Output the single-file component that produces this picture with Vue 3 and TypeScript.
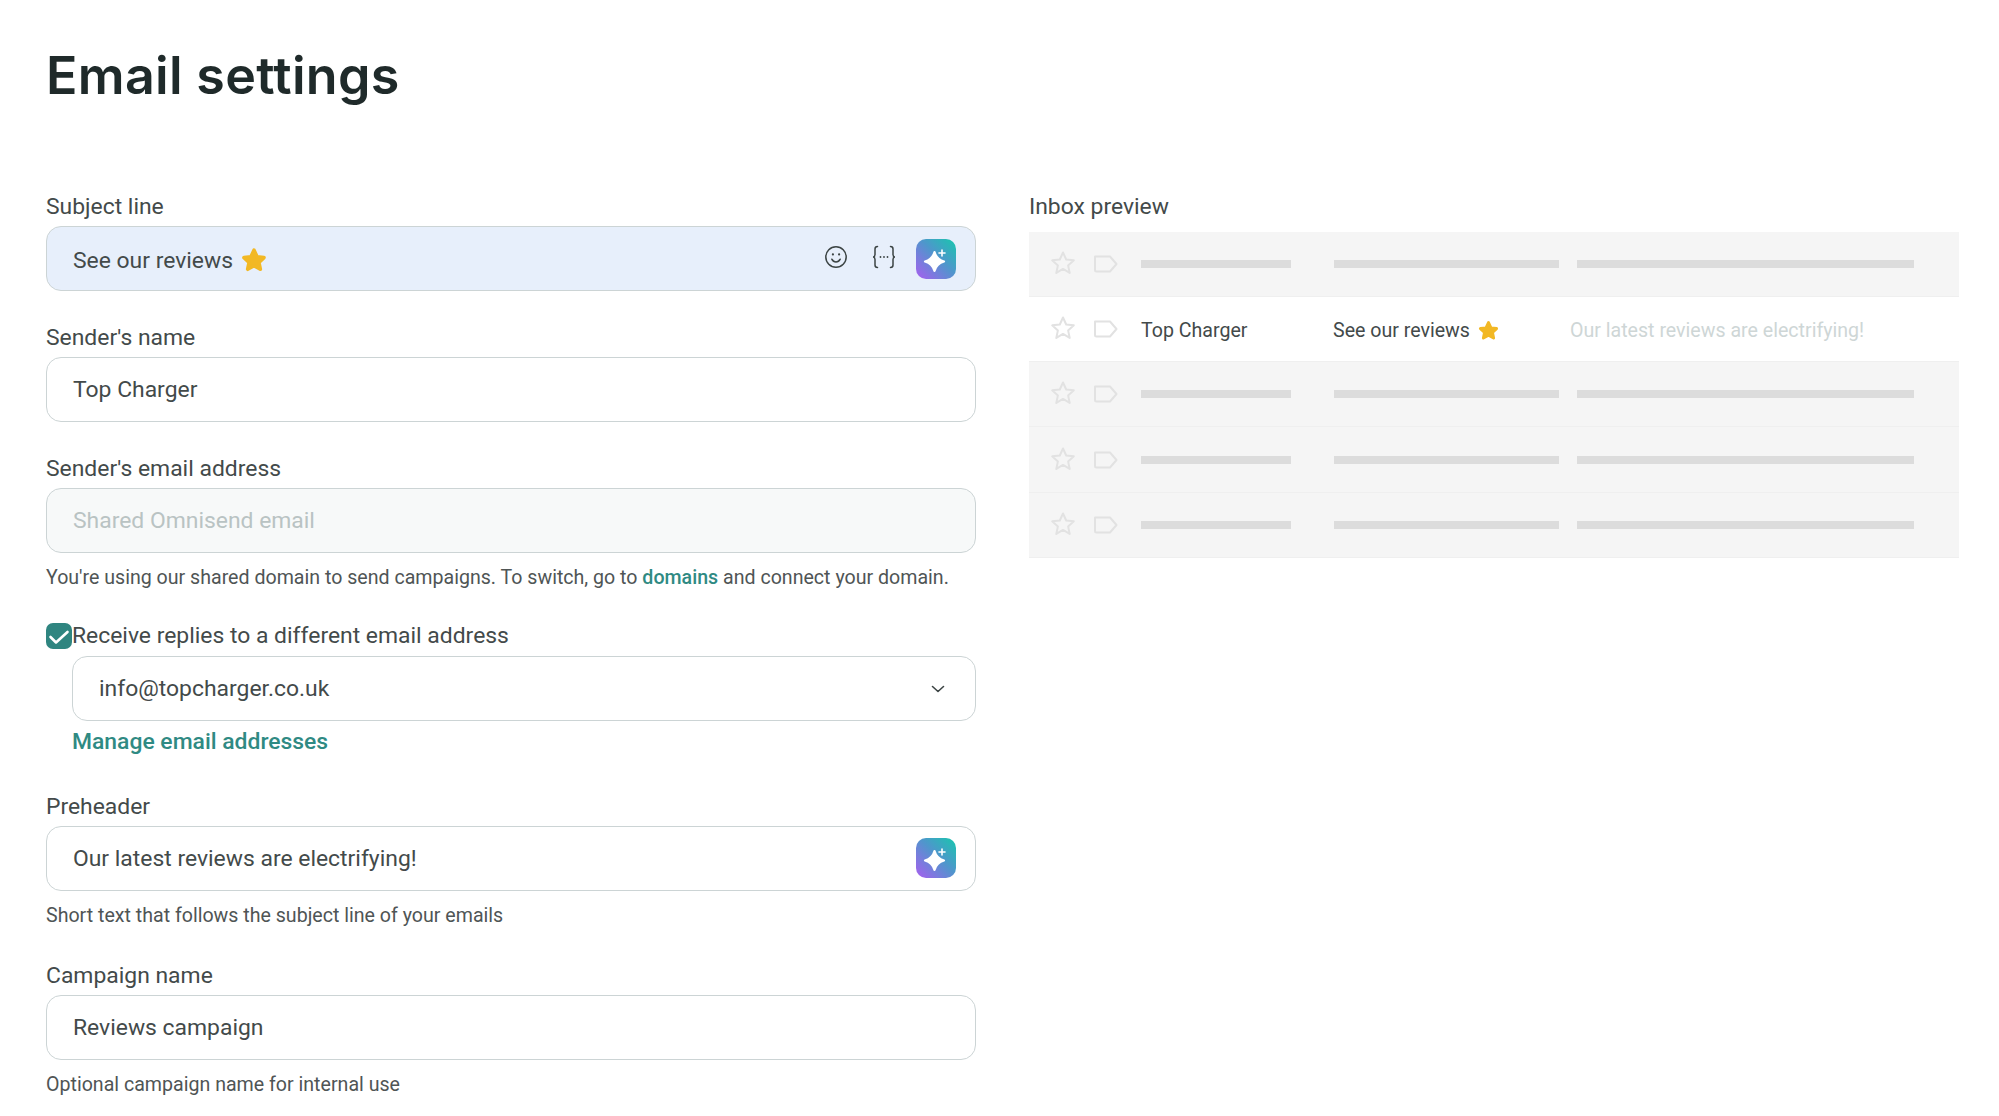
<script setup lang="ts">
interface InboxRow {
  sender?: string
  subject?: string
  preheader?: string
}

const rows: InboxRow[] = [
  {},
  { sender: 'Top Charger', subject: 'See our reviews', preheader: 'Our latest reviews are electrifying!' },
  {},
  {},
  {},
]
</script>

<template>
  <div class="page">
    <h1 class="title">Email settings</h1>
    <div class="columns">
      <div class="form">
        <div class="group">
          <div class="label">Subject line</div>
          <div class="field subject">
            <span class="value">See our reviews</span>
            <svg class="star" viewBox="0 0 24 24"><path d="M12 3l2.800 6 6.400.8-4.700 4.400 1.300 6.300L12 17.300l-5.800 3.200 1.300-6.300-4.700-4.400 6.400-.8z" fill="#f2b824" stroke="#f2b824" stroke-width="3.400" stroke-linejoin="round" /></svg>
            <span class="grow"></span>
            <svg class="tool smile" viewBox="0 0 24 24" fill="none" stroke="#3c4444" stroke-width="1.500" stroke-linecap="round"><circle cx="12" cy="12" r="10.200" /><path d="M7.800 14.200c1 1.900 2.500 2.800 4.200 2.800s3.200-.9 4.200-2.800" /><circle cx="8.900" cy="9.400" r="1.100" fill="#3c4444" stroke="none" /><circle cx="15.100" cy="9.400" r="1.100" fill="#3c4444" stroke="none" /></svg>
            <svg class="tool curly" viewBox="0 0 24 24" fill="none" stroke="#3c4444" stroke-width="1.500" stroke-linecap="round"><path d="M5.500 1.500C3.500 1.500 3 2.500 3 4v5.500c0 1.300-.7 2.300-1.800 2.500C2.300 12.200 3 13.200 3 14.500V20c0 1.500.5 2.500 2.500 2.500" /><path d="M18.500 1.500c2 0 2.500 1 2.500 2.500v5.500c0 1.300.7 2.300 1.800 2.500-1.100.2-1.800 1.200-1.800 2.500V20c0 1.500-.5 2.500-2.500 2.500" /><circle cx="8.500" cy="12" r=".9" fill="#3c4444" stroke="none" /><circle cx="12" cy="12" r=".9" fill="#3c4444" stroke="none" /><circle cx="15.500" cy="12" r=".9" fill="#3c4444" stroke="none" /></svg>
            <button class="spark"><svg viewBox="0 0 40 40" fill="#fff"><path d="M18.500 13C20 18.500 23 21 28 22.500 23 24 20 26.500 18.500 32 17 26.500 14 24 9 22.500 14 21 17 18.500 18.500 13z" stroke="#fff" stroke-width="2.200" stroke-linejoin="round" /><path d="M26 11v6M23 14h6" stroke="#fff" stroke-width="1.600" stroke-linecap="round" /></svg></button>
          </div>
        </div>

        <div class="group">
          <div class="label">Sender's name</div>
          <div class="field"><span class="value">Top Charger</span></div>
        </div>

        <div class="group">
          <div class="label">Sender's email address</div>
          <div class="field disabled"><span class="value">Shared Omnisend email</span></div>
          <div class="hint">You're using our shared domain to send campaigns. To switch, go to <a class="link">domains</a> and connect your domain.</div>
        </div>

        <div class="group replies">
          <div class="check-row">
            <span class="checkbox"><svg viewBox="0 0 26 26" fill="none" stroke="#fff" stroke-width="2.600" stroke-linecap="round" stroke-linejoin="round"><path d="M4.500 14l5.500 5.500L21.500 9" /></svg></span>
            <span class="label">Receive replies to a different email address</span>
          </div>
          <div class="nested">
            <div class="field">
              <span class="value">info@topcharger.co.uk</span>
              <span class="grow"></span>
              <svg class="chevron" viewBox="0 0 14 8" fill="none" stroke="#3c4444" stroke-width="1.600" stroke-linecap="round" stroke-linejoin="round"><path d="M1.500 1.500L7 6.500l5.500-5" /></svg>
            </div>
            <a class="manage">Manage email addresses</a>
          </div>
        </div>

        <div class="group">
          <div class="label">Preheader</div>
          <div class="field">
            <span class="value">Our latest reviews are electrifying!</span>
            <span class="grow"></span>
            <button class="spark"><svg viewBox="0 0 40 40" fill="#fff"><path d="M18.500 13C20 18.500 23 21 28 22.500 23 24 20 26.500 18.500 32 17 26.500 14 24 9 22.500 14 21 17 18.500 18.500 13z" stroke="#fff" stroke-width="2.200" stroke-linejoin="round" /><path d="M26 11v6M23 14h6" stroke="#fff" stroke-width="1.600" stroke-linecap="round" /></svg></button>
          </div>
          <div class="hint">Short text that follows the subject line of your emails</div>
        </div>

        <div class="group">
          <div class="label">Campaign name</div>
          <div class="field"><span class="value">Reviews campaign</span></div>
          <div class="hint">Optional campaign name for internal use</div>
        </div>
      </div>

      <div class="preview">
        <div class="label">Inbox preview</div>
        <div class="inbox">
          <div
            v-for="(row, i) in rows"
            :key="i"
            :class="['row', row.sender ? 'filled' : 'empty']"
          >
            <div class="row-icons">
              <svg class="row-star" viewBox="0 0 26 26" fill="none" stroke="#e2e2e2" stroke-width="2" stroke-linejoin="round"><path d="M13 2.500l3.200 7 7.600.8-5.700 5.100 1.600 7.500L13 18.900l-6.700 4 1.600-7.500-5.700-5.100 7.600-.8z" /></svg>
              <svg class="row-tag" viewBox="0 0 24 18" fill="none" stroke="#e2e2e2" stroke-width="2" stroke-linejoin="round"><path d="M1 1.500h15l6.500 7.500-6.500 7.500H2.500A1.500 1.500 0 0 1 1 15z" /></svg>
            </div>
            <template v-if="row.sender">
              <span class="cell sender">{{ row.sender }}</span>
              <span class="cell topic">{{ row.subject }}<svg class="row-emoji" viewBox="0 0 24 24"><path d="M12 3l2.800 6 6.400.8-4.700 4.400 1.300 6.300L12 17.300l-5.800 3.200 1.300-6.300-4.700-4.400 6.400-.8z" fill="#f2b824" stroke="#f2b824" stroke-width="3.400" stroke-linejoin="round" /></svg></span>
              <span class="cell muted">{{ row.preheader }}</span>
            </template>
            <template v-else>
              <span class="bar sender-bar"></span>
              <span class="bar topic-bar"></span>
              <span class="bar text-bar"></span>
            </template>
          </div>
        </div>
      </div>
    </div>
  </div>
</template>

<style>
body {
  background: #fff;
}
</style>

<style scoped>
.page {
  padding: 46px 39px 0 46px;
  font-family: Roboto, sans-serif;
  color: #434a4a;
}

.title {
  margin: 0;
  font-family: Inter, sans-serif;
  font-size: 52px;
  line-height: 60px;
  font-weight: 600;
  letter-spacing: 0.3px;
  color: #1f2a2a;
}

.columns {
  display: grid;
  grid-template-columns: 930px 930px;
  column-gap: 53px;
  margin-top: 85px;
}

.form {
  display: flex;
  flex-direction: column;
  gap: 31px;
}

.label {
  font-size: 22.9px;
  line-height: 32px;
  margin-bottom: 3px;
}

.field {
  display: flex;
  align-items: center;
  height: 65px;
  box-sizing: border-box;
  padding: 0 19px 0 26px;
  border: 1px solid #ccd4d5;
  border-radius: 15px;
  background: #fff;
  font-size: 22.9px;
}

.value {
  color: #434a4a;
}

.grow {
  flex: 1;
}

.subject {
  background: #e7effb;
}

.subject .value {
  padding-top: 3px;
}

.star {
  width: 26px;
  height: 26px;
  margin: 2px 0 0 8px;
}

.tool {
  width: 24px;
  height: 24px;
  margin-top: -3px;
}

.smile {
  margin-right: 24px;
}

.curly {
  margin-right: 20px;
}

.spark {
  width: 40px;
  height: 40px;
  padding: 0;
  border: none;
  border-radius: 10px;
  background: linear-gradient(45deg, #a85ef0 0%, #4f96cc 55%, #17c7ad 100%);
}

.spark svg {
  display: block;
  width: 40px;
  height: 40px;
}

.disabled {
  background: #f7f9f9;
}

.disabled .value {
  color: #b9c3c3;
}

.hint {
  margin-top: 11px;
  font-size: 19.6px;
  line-height: 27px;
  color: #4f5555;
}

.link {
  color: #2f8a83;
  font-weight: 500;
}

.replies {
  margin-top: -2px;
  margin-bottom: 2px;
}

.check-row {
  display: flex;
  align-items: center;
  height: 32px;
}

.check-row .label {
  margin-bottom: 0;
}

.checkbox {
  width: 26px;
  height: 26px;
  border-radius: 7px;
  background: #2f8580;
}

.checkbox svg {
  display: block;
}

.nested {
  margin: 4px 0 0 26px;
}

.chevron {
  width: 14px;
  height: 8px;
  margin-right: 11px;
}

.manage {
  display: block;
  margin-top: 4.700px;
  font-size: 22.9px;
  line-height: 32px;
  font-weight: 500;
  color: #2f8a83;
}

.inbox {
  margin-top: 8.500px;
}

.row {
  display: grid;
  grid-template-columns: 112px 193px 243px 1fr;
  align-items: center;
  height: 65.300px;
  box-sizing: border-box;
  border-bottom: 1px solid #efefef;
}

.empty {
  background: #f5f5f5;
}

.filled {
  background: #fff;
}

.row-icons {
  display: flex;
  align-items: center;
  gap: 18px;
  padding-left: 21px;
}

.row-star {
  width: 26px;
  height: 26px;
  margin-top: -2px;
}

.row-tag {
  width: 24px;
  height: 18px;
}

.bar {
  height: 8px;
  background: #dcdcdc;
}

.sender-bar {
  width: 150px;
}

.topic-bar {
  width: 225px;
}

.text-bar {
  width: 337px;
}

.cell {
  padding-top: 4px;
  font-size: 19.6px;
  white-space: nowrap;
}

.topic {
  display: flex;
  align-items: center;
  margin-left: -1px;
}

.row-emoji {
  width: 21px;
  height: 21px;
  margin-left: 8px;
}

.muted {
  margin-left: -7px;
  color: #ced6d6;
}
</style>
